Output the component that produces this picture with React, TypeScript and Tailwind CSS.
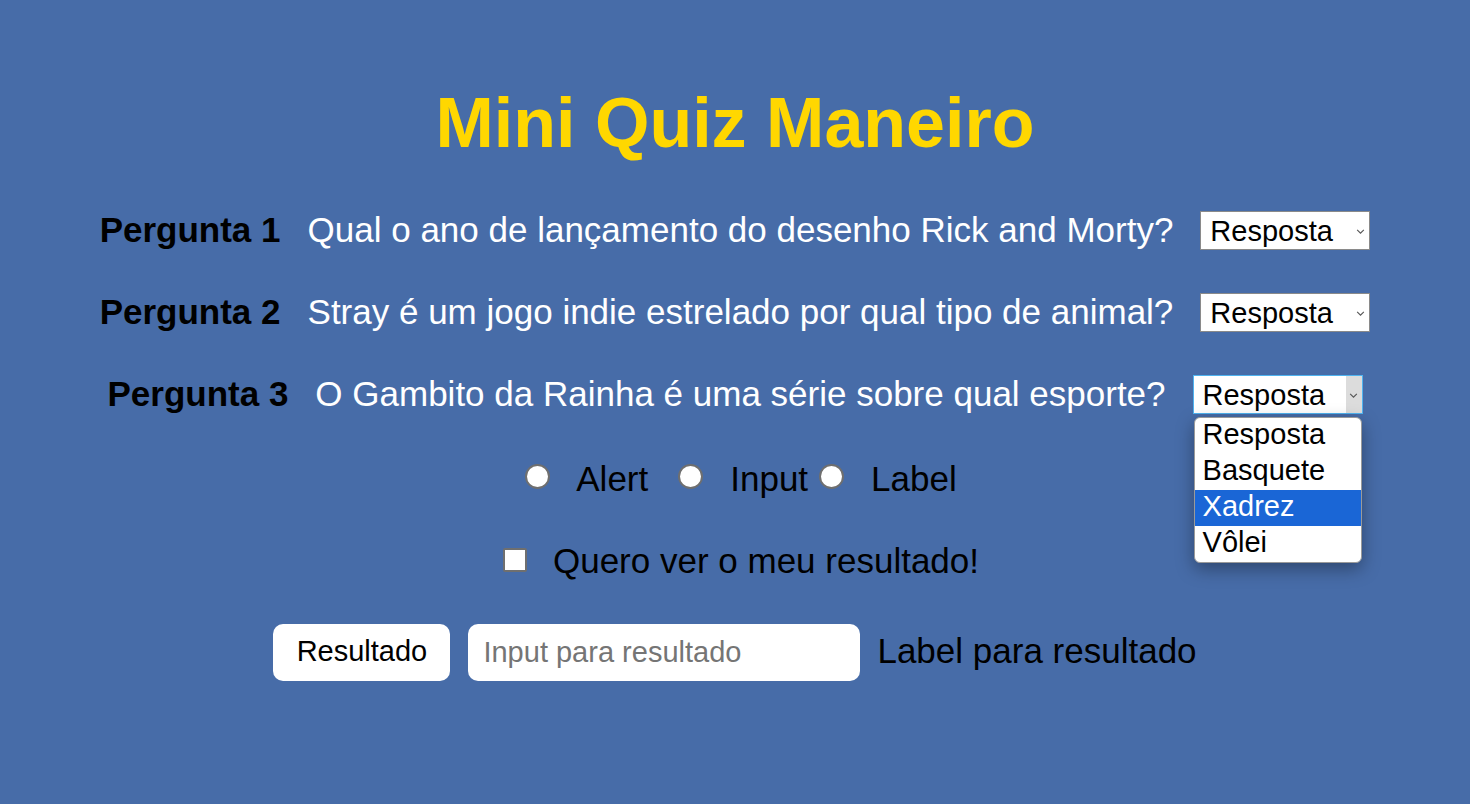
import React from "react";

const questions = [
  { n: 1, text: "Qual o ano de lançamento do desenho Rick and Morty?" },
  { n: 2, text: "Stray é um jogo indie estrelado por qual tipo de animal?" },
  { n: 3, text: "O Gambito da Rainha é uma série sobre qual esporte?" },
];

const options = ["Resposta", "Basquete", "Xadrez", "Vôlei"];

function Chevron() {
  return (
    <svg viewBox="0 0 10 6" className="w-[9px] h-[5px]" fill="none" stroke="#555" strokeWidth="1.3">
      <path d="M1 1l4 4 4-4" />
    </svg>
  );
}

function FakeSelect({ open }: { open?: boolean }) {
  return (
    <div className="relative">
      <div
        className={
          open
            ? "w-[170px] h-[39px] bg-white border border-[#4fb3f0] flex items-center justify-between pl-[9px]"
            : "w-[170px] h-[39px] bg-white border border-[#8a8a8a] flex items-center justify-between pl-[9px] pr-[4px]"
        }
      >
        <span className="text-[29px] leading-none text-black pt-[3px]">Resposta</span>
        {open ? (
          <div className="w-[16px] h-full bg-[#dcdcdc] flex items-center justify-center pt-[2px]">
            <Chevron />
          </div>
        ) : (
          <div className="pt-[2px]">
            <Chevron />
          </div>
        )}
      </div>
      {open && (
        <div className="absolute left-[1px] top-[42px] w-[168px] bg-white rounded-[6px] border border-[#9a9a9a] overflow-hidden shadow-[0_6px_18px_rgba(0,0,0,0.35)] z-10">
          {options.map((o) => (
            <div
              key={o}
              className={
                o === "Xadrez"
                  ? "h-[36px] flex items-center pl-[8px] pb-[2px] text-[29px] bg-[#1a66d6] text-white"
                  : "h-[36px] flex items-center pl-[8px] pb-[2px] text-[29px] text-black"
              }
            >
              {o}
            </div>
          ))}
        </div>
      )}
    </div>
  );
}

function Radio({ className }: { className: string }) {
  return (
    <div
      className={
        "w-[25px] h-[25px] rounded-full bg-white border-2 border-[#6f6f6f] shrink-0 mb-[6px] " + className
      }
    />
  );
}

export default function App() {
  return (
    <div className="min-h-[804px] w-full bg-[#476ca8] font-['Liberation_Sans',Arial,sans-serif] pt-[83px]">
      <h1 className="text-center text-[70px] leading-[80px] font-bold text-[#ffd700]">Mini Quiz Maneiro</h1>

      <div className="mt-[26px] flex flex-col">
        {questions.map((q) => (
          <div key={q.n} className="h-[82px] flex items-center justify-center gap-[27px]">
            <span className="text-[35px] font-bold text-black">Pergunta {q.n}</span>
            <span className="text-[35px] text-white">{q.text}</span>
            <FakeSelect open={q.n === 3} />
          </div>
        ))}

        <div className="h-[87px] flex items-center justify-center pl-[12px] pt-[2px]">
          <Radio className="" />
          <span className="ml-[26px] text-[35px] text-black">Alert</span>
          <Radio className="ml-[30px]" />
          <span className="ml-[27px] text-[35px] text-black">Input</span>
          <Radio className="ml-[11px]" />
          <span className="ml-[27px] text-[35px] text-black">Label</span>
        </div>

        <div className="h-[77px] flex items-center justify-center pl-[12px] pt-[2px]">
          <div className="w-[24px] h-[24px] bg-white border-2 border-[#6f6f6f] rounded-[2px] shrink-0 mb-[4px]" />
          <span className="ml-[26px] text-[35px] text-black">Quero ver o meu resultado!</span>
        </div>

        <div className="h-[106px] flex items-center justify-center">
          <button className="w-[177px] h-[57px] bg-white rounded-[10px] text-[29px] text-black">Resultado</button>
          <input
            placeholder="Input para resultado"
            className="ml-[18px] w-[392px] h-[57px] bg-white rounded-[10px] px-[15px] text-[29px] text-black placeholder:text-[#757575] outline-none"
          />
          <span className="ml-[17px] text-[35px] text-black mb-[2px]">Label para resultado</span>
        </div>
      </div>
    </div>
  );
}
